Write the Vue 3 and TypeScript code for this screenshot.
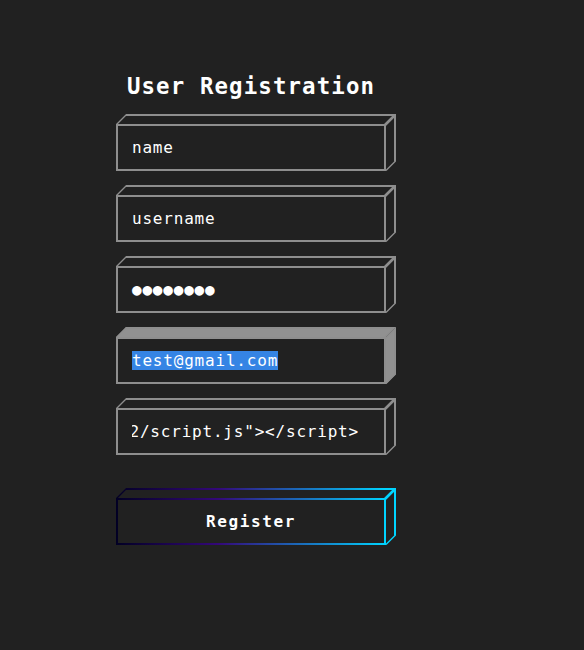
<script setup lang="ts">
interface Field {
  id: string
  text: string
  kind: 'text' | 'dots' | 'selected' | 'clipped'
}

const fields: Field[] = [
  { id: 'name', text: 'name', kind: 'text' },
  { id: 'username', text: 'username', kind: 'text' },
  { id: 'password', text: '●●●●●●●●', kind: 'dots' },
  { id: 'email', text: 'test@gmail.com', kind: 'selected' },
  { id: 'website', text: '2/script.js"><' + '/script>', kind: 'clipped' },
]
</script>

<template>
  <main class="page">
    <form class="form" @submit.prevent>
      <h1 class="title">User Registration</h1>
      <div v-for="f in fields" :key="f.id" class="box" :class="{ active: f.kind === 'selected' }">
        <svg class="frame" width="280" height="57" viewBox="0 0 280 57" aria-hidden="true">
          <path class="face" d="M10 0H280L270 10V12H0V10ZM280 0V47L270 57H268V12Z" />
          <path class="edge" d="M1 11H269V56H1Z" />
          <path class="edge" d="M10 1H279V47.5" />
          <path class="slant" d="M0.5 10.5L10.5 0.5M270 56.5L279.5 47" />
          <path class="corner" d="M269 11L279 1" />
          <path v-if="f.kind === 'selected'" class="seam" d="M270 10L280 0" />
        </svg>
        <div class="content"><span :class="f.kind">{{ f.text }}</span></div>
      </div>
      <button class="box submit" type="submit">
        <svg class="frame" width="280" height="57" viewBox="0 0 280 57" aria-hidden="true">
          <defs>
            <linearGradient id="glow" gradientUnits="userSpaceOnUse" x1="0" y1="0" x2="270" y2="0">
              <stop offset="0" stop-color="#020024" />
              <stop offset="0.38" stop-color="#340879" />
              <stop offset="1" stop-color="#00d4ff" />
            </linearGradient>
          </defs>
          <path class="edge" d="M1 11H269V56H1Z" />
          <path class="edge" d="M10 1H279V47.5" />
          <path class="slant" d="M0.5 10.5L10.5 0.5M270 56.5L279.5 47" />
          <path class="corner" d="M269 11L279 1" />
        </svg>
        <span class="content label">Register</span>
      </button>
    </form>
  </main>
</template>

<style>
body {
  background: #212121;
}
</style>

<style scoped>
.page {
  box-sizing: border-box;
  height: 650px;
  padding: 72px 0 0 116px;
  background: #212121;
  color: #fff;
  font-family: "DejaVu Sans Mono", monospace;
}
.form {
  display: flex;
  flex-direction: column;
  width: 280px;
  gap: 14px;
}
.title {
  width: 270px;
  height: 28px;
  margin: 0;
  text-align: center;
  white-space: nowrap;
  font-size: 22.4px;
  line-height: 28px;
  letter-spacing: 1.12px;
}
.box {
  position: relative;
  width: 280px;
  height: 57px;
  --line: #8e8e8e;
}
.frame {
  position: absolute;
  left: 0;
  top: 0;
  fill: none;
  stroke: var(--line);
}
.face {
  fill: none;
  stroke: none;
}
.active .face {
  fill: #919191;
}
.edge {
  stroke-width: 2;
}
.slant {
  stroke-width: 1.4;
}
.corner {
  stroke-width: 2.7;
}
.seam {
  stroke: #777;
  stroke-width: 0.7;
}
.content {
  box-sizing: border-box;
  display: flex;
  align-items: center;
  width: 270px;
  height: 57px;
  padding: 10px 16px 0;
  font-size: 16px;
  line-height: 19px;
  letter-spacing: 0.8px;
  white-space: pre;
}
.selected {
  background: #3584e4;
}
.clipped {
  display: flex;
  justify-content: flex-end;
  width: 227px;
  overflow: hidden;
}
.submit {
  margin: 19px 0 0;
  padding: 0;
  border: 0;
  background: none;
  color: #fff;
  font-family: inherit;
  --line: url(#glow);
}
.label {
  justify-content: center;
  font-weight: bold;
  letter-spacing: 1.6px;
}
</style>
